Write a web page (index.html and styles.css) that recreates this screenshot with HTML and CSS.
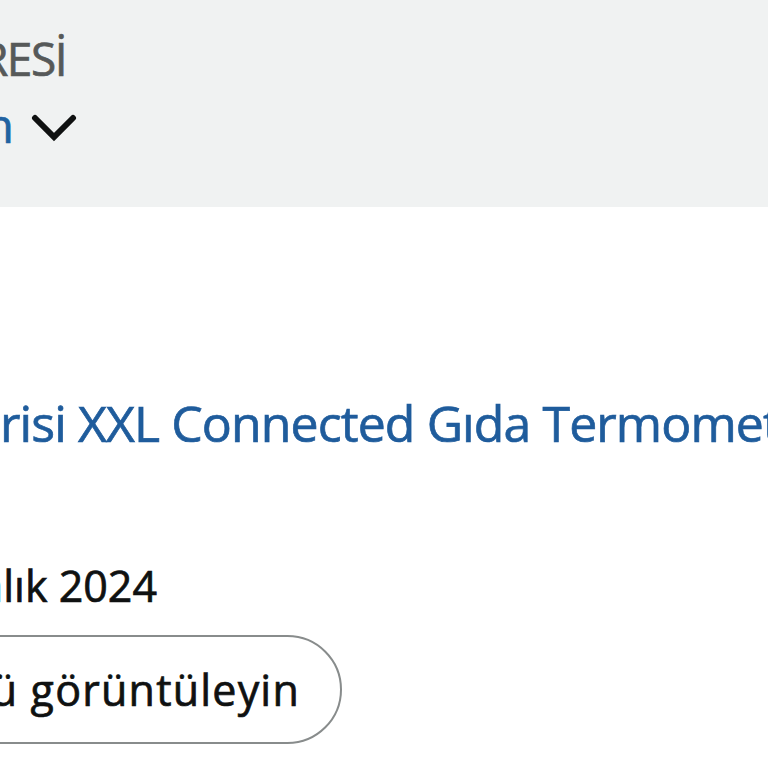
FILE: index.html
```html
<!DOCTYPE html>
<html lang="tr">
<head>
<meta charset="utf-8">
<title>Siparişlerim</title>
<link rel="stylesheet" href="styles.css">
</head>
<body>
<header class="order-header">
  <div class="label-row">
    <span class="label">TESLİMAT ADRESİ</span>
  </div>
  <div class="name-row">
    <div class="name-box"><a class="name" href="#">Ayşe Doğan</a></div>
    <svg class="chevron" width="46" height="28" viewBox="0 0 46 28" aria-hidden="true">
      <path d="M4 4 L23 23 L42 4" fill="none" stroke="#0f1111" stroke-width="6" stroke-linecap="round" stroke-linejoin="miter"/>
    </svg>
  </div>
</header>
<main class="order-body">
  <div class="title-row">
    <div class="title-prefix"><a class="title" href="#">MEATER Pro Se</a></div>
    <a class="title" href="#">risi XXL Connected Gıda Termometresi</a>
  </div>
  <div class="date-row">
    <span class="date">Teslim edildi: 18 Aralık 2024</span>
  </div>
  <div class="button-row">
    <a class="pill-button" href="#">Ürününüzü görüntüleyin</a>
  </div>
</main>
</body>
</html>
```
FILE: styles.css
```css
html, body {
  margin: 0;
  padding: 0;
}
body {
  width: 768px;
  height: 768px;
  overflow: hidden;
  background: #ffffff;
  font-family: "Open Sans", "Noto Sans", sans-serif;
  color: #0f1111;
  -webkit-text-stroke: 0.7px currentColor;
}
a {
  text-decoration: none;
}
.order-header {
  height: 207px;
  box-sizing: border-box;
  background: #f0f2f2;
  padding-top: 30px;
}
.label-row {
  width: 66px;
  display: flex;
  justify-content: flex-end;
  white-space: nowrap;
}
.label {
  font-size: 46px;
  line-height: 56px;
  letter-spacing: -1.5px;
  color: #565959;
}
.name-row {
  margin-top: 9px;
  display: flex;
  align-items: center;
  height: 60px;
}
.name-box {
  width: 14px;
  display: flex;
  justify-content: flex-end;
  white-space: nowrap;
}
.name {
  font-size: 48px;
  line-height: 60px;
  color: #2162a1;
}
.chevron {
  margin-left: 17px;
  margin-top: 5px;
  flex: none;
}
.order-body {
  padding-top: 184px;
}
.title-row {
  display: flex;
  white-space: nowrap;
}
.title-prefix {
  width: 0;
  display: flex;
  justify-content: flex-end;
}
.title {
  font-size: 50px;
  line-height: 64px;
  letter-spacing: -0.9px;
  color: #1f5c9c;
}
.date-row {
  margin-top: 103px;
  width: 157px;
  display: flex;
  justify-content: flex-end;
  white-space: nowrap;
}
.date {
  font-size: 43px;
  line-height: 56px;
}
.button-row {
  margin-top: 21px;
  width: 342px;
  display: flex;
  justify-content: flex-end;
  white-space: nowrap;
}
.pill-button {
  flex: none;
  box-sizing: border-box;
  height: 109px;
  display: flex;
  align-items: center;
  padding: 0 40px 0 60px;
  border: 2px solid #888c8c;
  border-radius: 55px;
  font-size: 43px;
  line-height: 56px;
  letter-spacing: 1.2px;
  color: #0f1111;
  -webkit-text-stroke: 0.7px #0f1111;
}
```
